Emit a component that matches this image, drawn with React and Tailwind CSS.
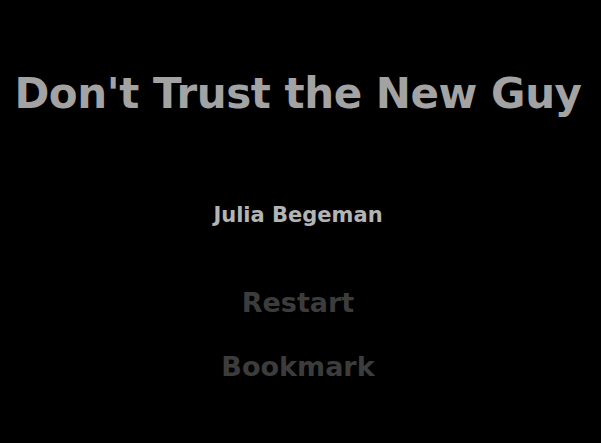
import React from 'react';

export default function App() {
    return (
        <div className="w-[601px] h-[443px] bg-black pr-[5px] flex flex-col items-center overflow-hidden" style={{ fontFamily: '"DejaVu Sans", Verdana, sans-serif' }}>
            <h1 className="mt-[70px] text-[42px] leading-[48px] font-bold tracking-[-0.45px] text-[#a3a3a3] whitespace-nowrap">Don't Trust the New Guy</h1>
            <p className="mt-[84px] text-[21px] leading-[26px] font-bold text-[#b4b4b4]">Julia Begeman</p>
            <div className="mt-[58px] flex flex-col items-center gap-[30px]">
                <button className="text-[27px] leading-[34px] font-bold text-[#3c3c3c]">Restart</button>
                <button className="text-[27px] leading-[34px] font-bold text-[#3c3c3c]">Bookmark</button>
            </div>
        </div>
    );
}
